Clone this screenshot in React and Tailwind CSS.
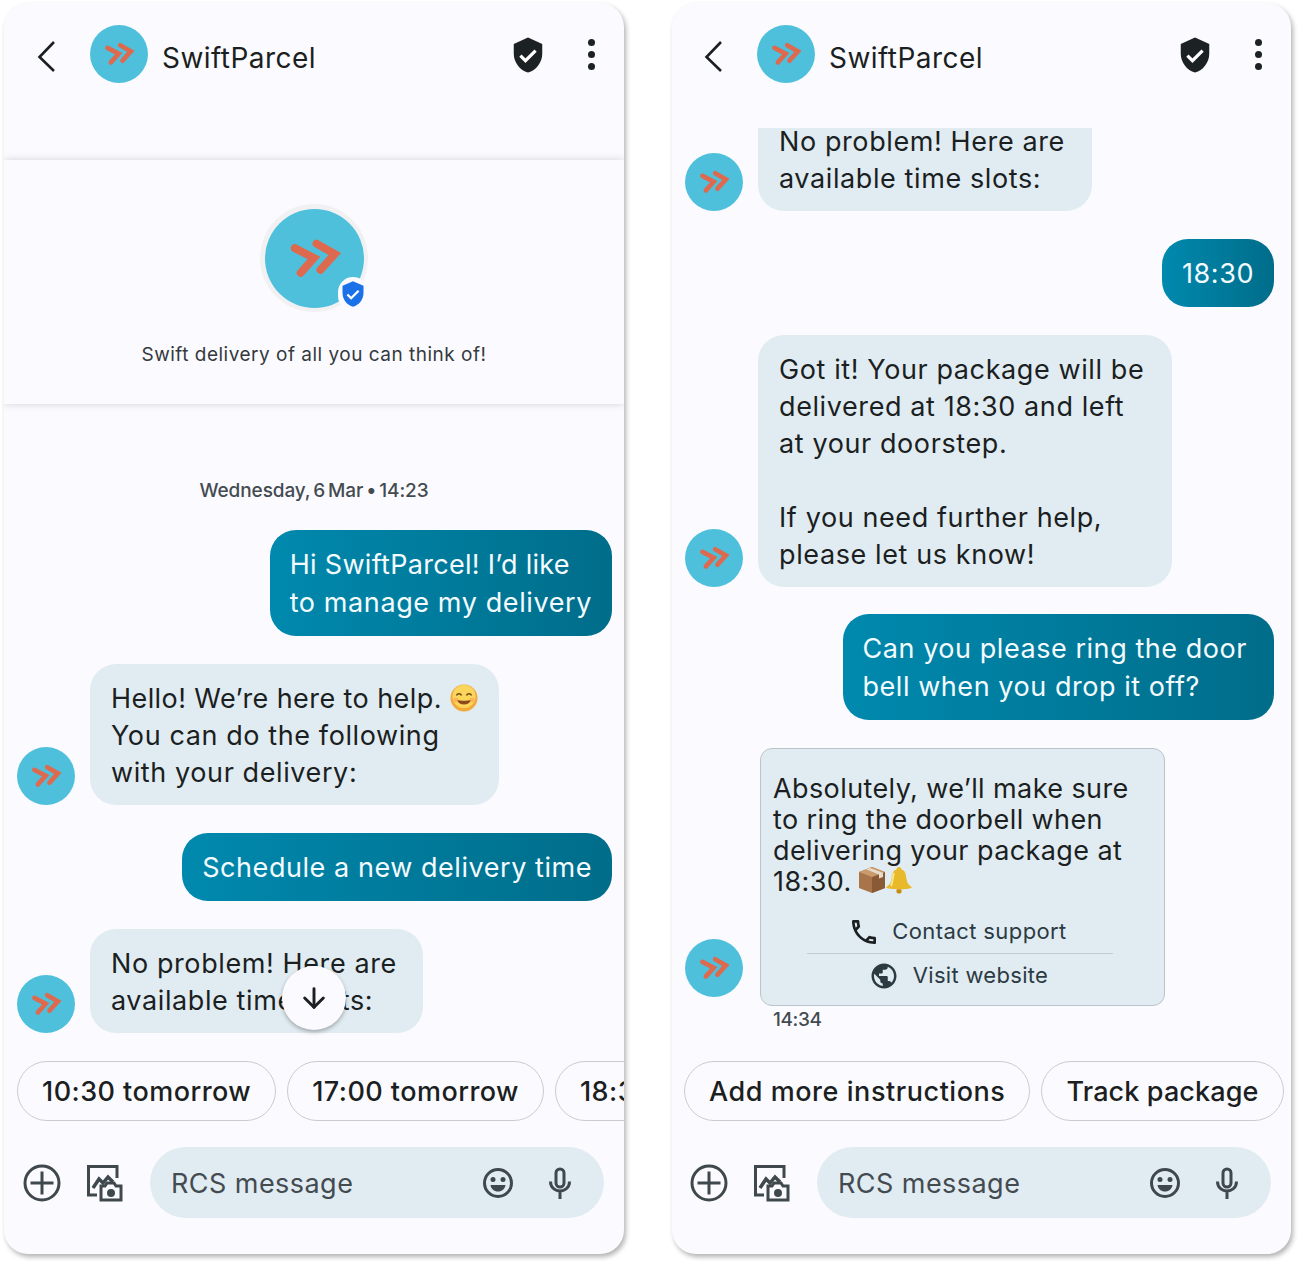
import { ArrowDown } from 'lucide-react'
import { MdOutlineCall, MdPublic } from 'react-icons/md'

/* Brand mark: teal disc with the two orange chevrons */
function Logo({ className }) {
  return (
    <svg viewBox="0 0 100 100" className={className}>
      <circle cx="50" cy="50" r="50" fill="#4fc0dc" />
      <g fill="none" stroke="#dd6a4f" strokeWidth="8" strokeLinecap="round" strokeLinejoin="miter">
        <path d="M30 39.5 L49.5 49.5 L36 64.5" />
        <path d="M52 35 L70.5 45.5 L56 61.5" />
      </g>
    </svg>
  )
}

function Avatar() {
  return <Logo className="w-[58px] h-[58px] shrink-0" />
}

function Shield({ className, fill }) {
  return (
    <svg viewBox="0 0 24 24" className={className}>
      <path d="M12 1 3 5v6c0 5.55 3.84 10.74 9 12 5.16-1.26 9-6.45 9-12V5z" fill={fill} />
      <path d="M7.2 12.4 10.4 15.6 16.8 9.2" fill="none" stroke="#fff" strokeWidth="2" />
    </svg>
  )
}

function Header({ className }) {
  return (
    <div className={`h-[102px] shrink-0 flex items-center pr-[26px] ${className}`}>
      <svg viewBox="0 0 20 32" className="w-[20px] h-[32px] mt-[3px]" fill="none" stroke="#1b1f22" strokeWidth="2.6">
        <path d="M18 2 3.500 17 18 31" />
      </svg>
      <Logo className="ml-[34px] w-[58px] h-[58px]" />
      <span className="ml-[14px] mt-[8px] text-[28px] tracking-[0.45px] text-[#1b1f22]">SwiftParcel</span>
      <Shield className="w-[38px] h-[38px] ml-auto mt-[1px]" fill="#1c2124" />
      <div className="ml-[37px] mt-[1px] w-[14px] flex flex-col items-center gap-[5px]">
        <span className="w-[7px] h-[7px] rounded-full bg-[#1c2124]" />
        <span className="w-[7px] h-[7px] rounded-full bg-[#1c2124]" />
        <span className="w-[7px] h-[7px] rounded-full bg-[#1c2124]" />
      </div>
    </div>
  )
}

function Sent({ children, className = 'pr-[20px]' }) {
  return (
    <div
      className={`self-end rounded-[26px] bg-linear-to-r from-[#0089ae] to-[#006d8a] pl-[20px] pt-[16px] pb-[14px] text-[27px] tracking-[0.55px] leading-[38px] text-[#f4fbff] whitespace-nowrap ${className}`}
    >
      {children}
    </div>
  )
}

function Received({ children, clipTop, className = 'pr-[21px]' }) {
  return (
    <div className="flex items-end gap-[15px]">
      <Avatar />
      <div
        className={`bg-[#e1ecf2] pl-[21px] pb-[14px] text-[27px] tracking-[0.6px] leading-[37px] text-[#1b1f22] whitespace-nowrap ${className} ${
          clipTop ? 'rounded-b-[26px] -mt-[5px]' : 'rounded-[26px] pt-[16px]'
        }`}
      >
        {children}
      </div>
    </div>
  )
}

function Smile() {
  return (
    <svg viewBox="0 0 28 28" className="inline-block w-[28px] h-[28px] ml-[8px] align-[4px] -my-[8px]">
      <circle cx="14" cy="14" r="13.5" fill="#f2a93a" />
      <circle cx="14" cy="12.5" r="11.500" fill="#fbd65a" />
      <path d="M6.5 11.5c1-2.5 4-2.5 5 0M16.5 11.5c1-2.5 4-2.5 5 0" fill="none" stroke="#6b4318" strokeWidth="1.5" />
      <path d="M7 16c2 6 12 6 14 0-4 1-10 1-14 0z" fill="#8c4a1c" />
      <circle cx="6" cy="16" r="2.4" fill="#f59c5c" opacity="0.6" />
      <circle cx="22" cy="16" r="2.4" fill="#f59c5c" opacity="0.6" />
    </svg>
  )
}

function Parcel() {
  return (
    <svg viewBox="0 0 28 28" className="w-[28px] h-[28px]">
      <path d="M14 1 27 6v16L14 27 1 22V6z" fill="#a9744a" />
      <path d="M14 11 27 6v16L14 27z" fill="#8a5a36" />
      <path d="M14 1 27 6 14 11 1 6z" fill="#c99a6c" />
      <path d="M8 3.3 21 8.400v4L25 11V6.800L12 2z" fill="#e6dccb" />
    </svg>
  )
}

function Bell() {
  return (
    <svg viewBox="0 0 28 28" className="w-[28px] h-[28px] -ml-px">
      <circle cx="14" cy="25" r="2.6" fill="#c98a12" />
      <path d="M14 1c-1.5 0-2.3 1-2.3 2.2C7.5 4.5 7 9 6.5 13c-.4 3.6-2 6-5.5 8.500 4 2.500 22 2.500 26 0-3.500-2.500-5.100-4.900-5.500-8.500C21 9 20.500 4.500 16.300 3.200 16.300 2 15.500 1 14 1z" fill="#e8b92a" />
      <path d="M9 7c-1.500 3-1 9-3 13" fill="none" stroke="#fbe68a" strokeWidth="2" />
    </svg>
  )
}

function Composer({ className }) {
  return (
    <div className={`flex items-center pr-[20px] pt-[26px] pb-[36px] ${className}`}>
      <svg viewBox="0 0 38 38" className="w-[38px] h-[38px] shrink-0" fill="none" stroke="#3f484d" strokeWidth="3">
        <circle cx="19" cy="19" r="17" />
        <path d="M19 7.500v23M7.500 19h23" />
      </svg>
      <svg viewBox="0 0 38 38" className="w-[38px] h-[38px] ml-[25px] shrink-0" fill="none" stroke="#3f484d" strokeWidth="3">
        <path d="M11 31H2.500V2.500H31V14" />
        <path d="M7 24l6-9 4 4 5-6 5 5" strokeWidth="3.500" />
        <path d="M15 36V22h4l2-3h7l2 3h5v14z" fill="#fbfbff" />
        <circle cx="25" cy="29" r="2.500" fill="#3f484d" />
      </svg>
      <div className="ml-[26px] flex-1 h-[71px] rounded-full bg-[#e1ecf2] flex items-center pl-[21px] pr-[32px]">
        <span className="mt-[3px] text-[27px] tracking-[0.45px] text-[#444b50]">RCS message</span>
        <svg viewBox="0 0 32 32" className="w-[32px] h-[32px] ml-auto">
          <circle cx="16" cy="16" r="13.500" fill="none" stroke="#3f484d" strokeWidth="3" />
          <circle cx="11" cy="12.500" r="2.500" fill="#3f484d" />
          <circle cx="21" cy="12.500" r="2.500" fill="#3f484d" />
          <path d="M8.500 18h15c-.6 4-3.500 6.500-7.500 6.500s-6.900-2.500-7.500-6.500z" fill="#3f484d" />
        </svg>
        <svg viewBox="0 0 24 32" className="w-[24px] h-[32px] ml-[34px]" fill="none" stroke="#3f484d" strokeWidth="3">
          <rect x="8" y="2" width="8" height="18" rx="4" />
          <path d="M2.500 14.500c0 5.500 4 9.500 9.500 9.500s9.500-4 9.500-9.500M12 24v8" />
        </svg>
      </div>
    </div>
  )
}

function Chip({ label, className = 'tracking-[0.45px]' }) {
  return (
    <div
      className={`h-[60px] shrink-0 rounded-full border border-[#c9cccf] flex items-center px-[24px] pt-[2px] text-[27px] font-medium text-[#1b1f22] whitespace-nowrap ${className}`}
    >
      {label}
    </div>
  )
}

function LeftPhone() {
  return (
    <div className="relative w-[620px] h-[1251px] mt-[3px] ml-[4px] rounded-[24px] bg-[#fbfbff] shadow-[2px_3px_5px_rgba(0,0,0,0.3)] overflow-hidden flex flex-col">
      <Header className="pl-[32px]" />
      <div className="mt-[55px] h-[244px] shrink-0 bg-[#fbfbff] shadow-[0_0_8px_rgba(0,0,0,0.16)] flex flex-col items-center">
        <div className="relative mt-[44px] w-[108px] h-[108px] rounded-full bg-[#f1f1f3] flex items-center justify-center">
          <Logo className="w-[99px] h-[99px]" />
          <div className="absolute right-0 bottom-[1px] w-[30px] h-[34px] rounded-full bg-[#fbfbff] flex items-center justify-center">
            <Shield className="w-[28px] h-[28px]" fill="#1b72e8" />
          </div>
        </div>
        <p className="mt-[30px] text-[19px] tracking-[0.5px] leading-[26px] text-[#34393d]">
          Swift delivery of all you can think of!
        </p>
      </div>
      <p className="mt-[74px] text-center text-[19px] font-medium tracking-[-0.1px] [word-spacing:-2px] leading-[26px] text-[#444b50]">
        Wednesday, 6 Mar • 14:23
      </p>
      <div className="mt-[26px] pl-[13px] pr-[12px] flex flex-col gap-[28px]">
        <Sent>
          <div className="tracking-[0.3px]">Hi SwiftParcel! I’d like</div>
          <div className="tracking-[0.6px]">to manage my delivery</div>
        </Sent>
        <Received>
          <div className="tracking-[0.42px]">
            Hello! We’re here to help.
            <Smile />
          </div>
          <div>You can do the following</div>
          <div>with your delivery:</div>
        </Received>
        <Sent>Schedule a new delivery time</Sent>
        <Received className="pr-[26px]">
          <div>No problem! Here are</div>
          <div>available time slots:</div>
        </Received>
      </div>
      <div className="absolute left-[278px] top-[963px] w-[64px] h-[64px] rounded-full bg-[#fbfbff] shadow-[0_2px_4px_rgba(0,0,0,0.3)] flex items-center justify-center">
        <ArrowDown className="w-[32px] h-[32px] text-[#1b1f22]" strokeWidth={2.2} />
      </div>
      <div className="mt-auto pl-[13px] flex gap-[11px]">
        <Chip label="10:30 tomorrow" />
        <Chip label="17:00 tomorrow" />
        <Chip label="18:30 tomorrow" />
      </div>
      <Composer className="pl-[19px]" />
    </div>
  )
}

function RightPhone() {
  return (
    <div className="w-[619px] h-[1251px] mt-[3px] ml-[48px] rounded-[24px] bg-[#fbfbff] shadow-[2px_3px_5px_rgba(0,0,0,0.3)] overflow-hidden flex flex-col">
      <Header className="pl-[31px]" />
      <div className="mt-[23px] h-[907px] overflow-hidden pl-[13px] pr-[17px] flex flex-col gap-[28px]">
        <Received clipTop className="pr-[27px]">
          <div>No problem! Here are</div>
          <div>available time slots:</div>
        </Received>
        <Sent>18:30</Sent>
        <Received className="pr-[28px]">
          <div>Got it! Your package will be</div>
          <div>delivered at 18:30 and left</div>
          <div>at your doorstep.</div>
          <div className="h-[37px]" />
          <div>If you need further help,</div>
          <div>please let us know!</div>
        </Received>
        <Sent className="-mt-px pr-[27px]">
          <div>Can you please ring the door</div>
          <div>bell when you drop it off?</div>
        </Sent>
        <div>
          <div className="flex items-end gap-[17px]">
            <div className="mb-[9px]">
              <Avatar />
            </div>
            <div className="w-[405px] h-[258px] rounded-[12px] border border-[#bcc4c9] bg-[#e1ecf2] pt-[24px] px-[12px]">
              <div className="text-[27px] tracking-[0.4px] leading-[31px] text-[#1b1f22] whitespace-nowrap">
                <div>Absolutely, we’ll make sure</div>
                <div>to ring the doorbell when</div>
                <div>delivering your package at</div>
                <div className="flex items-center gap-[6px]">
                  18:30.
                  <span className="flex -mt-[3px]">
                    <Parcel />
                    <Bell />
                  </span>
                </div>
              </div>
              <div className="ml-[34px] mr-[39px] mt-[13px] pr-[5px] h-[44px] border-b border-[#c3cbd0] flex items-center justify-center gap-[12px] text-[22px] tracking-[0.4px] text-[#2c3a42]">
                <MdOutlineCall className="w-[32px] h-[32px] text-[#1b1f22]" />
                Contact support
              </div>
              <div className="h-[43px] pr-[8px] flex items-center justify-center gap-[14px] text-[22px] tracking-[0.3px] text-[#2c3a42]">
                <MdPublic className="w-[30px] h-[30px]" />
                Visit website
              </div>
            </div>
          </div>
          <p className="ml-[88px] mt-[1px] text-[19px] font-medium tracking-[-0.4px] leading-[26px] text-[#444b50]">14:34</p>
        </div>
      </div>
      <div className="mt-auto pl-[12px] flex gap-[11px]">
        <Chip label="Add more instructions" className="tracking-[0.55px]" />
        <Chip label="Track package" className="tracking-[0.12px]" />
      </div>
      <Composer className="pl-[18px]" />
    </div>
  )
}

export default function App() {
  return (
    <div className="flex w-[1302px] h-[1264px] bg-white font-['Inter',sans-serif]">
      <LeftPhone />
      <RightPhone />
    </div>
  )
}
